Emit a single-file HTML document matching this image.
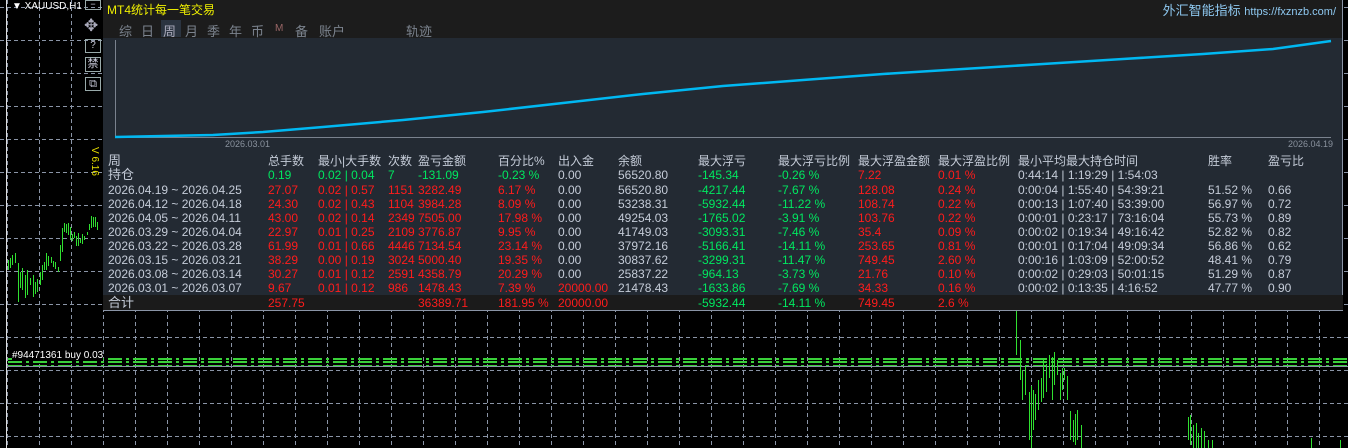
<!DOCTYPE html>
<html><head><meta charset="utf-8"><style>
*{margin:0;padding:0;box-sizing:border-box}
body{width:1348px;height:448px;background:#000;overflow:hidden;position:relative;font-family:"Liberation Sans","Noto Sans CJK SC",sans-serif}
.a{position:absolute;white-space:nowrap}
#panel{position:absolute;left:103px;top:0;width:1240px;height:311px;background:#232a33;border-right:1px solid #8a94a6;border-bottom:1px solid #8a94a6}
#hdr{position:absolute;left:0;top:0;width:100%;height:38px;background:#1c1c1c}
.t{position:absolute;font-size:12px;line-height:14px;color:#c5ccd8;white-space:nowrap}
.r{color:#ff1c1c}.g{color:#00e860}
.tab{position:absolute;top:21px;font-size:13px;color:#7b838e}
</style></head><body>
<svg class="a" style="left:0;top:0" width="1348" height="448">
<g stroke="#8a94a6" stroke-width="1" stroke-dasharray="4,3">
<line x1="0" y1="7.5" x2="1348" y2="7.5"/><line x1="0" y1="40.5" x2="1348" y2="40.5"/><line x1="0" y1="73.5" x2="1348" y2="73.5"/><line x1="0" y1="106.5" x2="1348" y2="106.5"/><line x1="0" y1="139.5" x2="1348" y2="139.5"/><line x1="0" y1="172.5" x2="1348" y2="172.5"/><line x1="0" y1="205.5" x2="1348" y2="205.5"/><line x1="0" y1="238.5" x2="1348" y2="238.5"/><line x1="0" y1="271.5" x2="1348" y2="271.5"/><line x1="0" y1="304.5" x2="1348" y2="304.5"/><line x1="0" y1="337.5" x2="1348" y2="337.5"/><line x1="0" y1="370.5" x2="1348" y2="370.5"/><line x1="0" y1="403.5" x2="1348" y2="403.5"/><line x1="0" y1="436.5" x2="1348" y2="436.5"/>
</g>
<g stroke="#8a94a6" stroke-width="1" stroke-dasharray="4,3" id="vg"></g>
<line x1="6.5" y1="0" x2="6.5" y2="448" stroke="#ddd"/>
<g stroke="#3ad13a" stroke-width="2" stroke-dasharray="14,4,3,4">
<line x1="8" y1="359" x2="1348" y2="359"/><line x1="8" y1="362" x2="1348" y2="362"/><line x1="8" y1="366" x2="1348" y2="366"/>
</g>
<line x1="8" y1="366.5" x2="1348" y2="366.5" stroke="#8a94a6"/>
<g stroke="#30e030" stroke-width="1" id="cd"></g>
</svg>
<div class="a" style="left:12px;top:1px;font-size:10px;color:#fff">▼ XAUUSD,H1</div>
<div class="a" style="left:85px;top:0;width:16px;height:10px;border:1px solid #9aa;color:#ccd;font-size:9px;line-height:7px;text-align:center">−</div>
<div class="a" style="left:84px;top:17px;font-size:17px;color:#aab;line-height:17px">✥</div>
<div class="a" style="left:85px;top:39px;width:16px;height:14px;border:1px solid #9aa;color:#ccd;font-size:10px;line-height:12px;text-align:center">?</div>
<div class="a" style="left:85px;top:57px;width:16px;height:15px;border:1px solid #9aa;color:#ccd;font-size:11px;line-height:13px;text-align:center">禁</div>
<div class="a" style="left:85px;top:77px;width:16px;height:14px;border:1px solid #9aa;color:#ccd;font-size:11px;line-height:12px;text-align:center">⧉</div>
<div class="a" style="top:147px;font-size:10px;color:#e8e000;transform:rotate(90deg);transform-origin:0 0;left:100px">V 6.16</div>
<div class="a" style="left:12px;top:350px;font-size:10px;color:#fff;background:#000">#94471361 buy 0.03</div>
<div id="panel">
<div id="hdr"></div>
<div class="a" style="left:4px;top:1px;font-size:12px;color:#f0f000">MT4统计每一笔交易</div>
<div class="a" style="right:6px;top:0;font-size:13px;color:#8ec8f0">外汇智能指标 <span style="font-size:11px">https://fxznzb.com/</span></div>
<div class="a" style="left:58px;top:20px;width:20px;height:17px;background:#2b3440"></div>
<div class="tab" style="left:16px">综</div><div class="tab" style="left:38px">日</div><div class="tab" style="left:60px;color:#aab">周</div><div class="tab" style="left:82px">月</div><div class="tab" style="left:104px">季</div><div class="tab" style="left:126px">年</div><div class="tab" style="left:148px">币</div><div class="tab" style="left:172px;font-size:10px;top:23px;color:#966">M</div><div class="tab" style="left:192px">备</div><div class="tab" style="left:216px">账户</div><div class="tab" style="left:303px">轨迹</div>
<svg class="a" style="left:0;top:38px" width="1240" height="110">
<line x1="12.5" y1="2" x2="12.5" y2="100" stroke="#7a828e"/>
<line x1="12" y1="99.5" x2="1228" y2="99.5" stroke="#7a828e"/>
<polyline fill="none" stroke="#00b8f2" stroke-width="2.5" points="12,99 60,98 110,97 160,94 220,89 300,82 380,74 460,65 540,56 620,48 700,42 780,36 860,31 940,26 1020,21 1100,16 1170,11 1228,3"/>
</svg>
<div class="a" style="left:122px;top:139px;font-size:9px;color:#8a929e">2026.03.01</div>
<div class="a" style="left:1185px;top:139px;font-size:9px;color:#8a929e">2026.04.19</div>
<div class="a" style="left:0;top:295px;width:1240px;height:15px;background:#1b1b1b"></div>
<div id="tb"></div>
</div>
<script>
var vg=document.getElementById('vg'),s='';
for(var x=7;x<1348;x+=32)s+='<line x1="'+(x+.5)+'" y1="0" x2="'+(x+.5)+'" y2="448"/>';
vg.innerHTML=s;
var cd=document.getElementById('cd');s='';
var L=[[8,120,130],[10,118,128],[12,115,125],[15,113,123],[18,123,162],[20,132,148],[22,128,150],[25,135,158],[27,130,155],[30,138,145],[33,135,157],[35,142,154],[37,139,152],[40,132,145],[42,125,140],[44,122,130],[46,113,130],[48,116,126],[51,117,123],[53,121,127],[55,122,129],[58,127,132],[60,105,121],[62,88,112],[64,83,92],[66,84,93],[68,83,95],[70,87,100],[72,94,101],[74,92,98],[76,96,106],[78,93,106],[80,99,103],[82,94,104],[84,96,100],[87,92,95],[89,84,90],[91,76,88],[93,77,87],[95,77,87],[97,82,90]];
var c=[[1003,300,310],[1016,310,355],[1020,340,380],[1022,370,400],[1025,365,395],[1029,392,440],[1031,386,448],[1033,390,430],[1035,394,420],[1038,380,410],[1041,378,402],[1043,360,398],[1046,364,392],[1049,355,378],[1052,357,400],[1054,352,385],[1057,360,375],[1060,373,400],[1062,368,390],[1064,368,380],[1067,376,400],[1070,411,440],[1073,420,442],[1075,414,445],[1077,410,440],[1081,425,448],[1188,417,440],[1190,415,445],[1193,425,448],[1196,423,448],[1198,433,448],[1201,428,448],[1204,431,448],[1208,440,448],[1212,440,448],[1311,438,448],[1340,440,448]];
for(var i=0;i<L.length;i++)c.push([L[i][0],L[i][1]+140,L[i][2]+140]);
for(var i=0;i<c.length;i++)s+='<line x1="'+(c[i][0]+.5)+'" y1="'+c[i][1]+'" x2="'+(c[i][0]+.5)+'" y2="'+c[i][2]+'"/>';
cd.innerHTML=s;
var cols=[5,165,215,285,315,395,455,515,595,675,755,835,915,1105,1165];
var R='r',G='g',W='';
var rows=[
[['周',W],['总手数',W],['最小|大手数',W],['次数',W],['盈亏金额',W],['百分比%',W],['出入金',W],['余额',W],['最大浮亏',W],['最大浮亏比例',W],['最大浮盈金额',W],['最大浮盈比例',W],['最小平均最大持仓时间',W],['胜率',W],['盈亏比',W]],
[['持仓',W],['0.19',G],['0.02 | 0.04',G],['7',G],['-131.09',G],['-0.23 %',G],['0.00',W],['56520.80',W],['-145.34',G],['-0.26 %',G],['7.22',R],['0.01 %',R],['0:44:14 | 1:19:29 | 1:54:03',W],['',W],['',W]],
[['2026.04.19 ~ 2026.04.25',W],['27.07',R],['0.02 | 0.57',R],['1151',R],['3282.49',R],['6.17 %',R],['0.00',W],['56520.80',W],['-4217.44',G],['-7.67 %',G],['128.08',R],['0.24 %',R],['0:00:04 | 1:55:40 | 54:39:21',W],['51.52 %',W],['0.66',W]],
[['2026.04.12 ~ 2026.04.18',W],['24.30',R],['0.02 | 0.43',R],['1104',R],['3984.28',R],['8.09 %',R],['0.00',W],['53238.31',W],['-5932.44',G],['-11.22 %',G],['108.74',R],['0.22 %',R],['0:00:13 | 1:07:40 | 53:39:00',W],['56.97 %',W],['0.72',W]],
[['2026.04.05 ~ 2026.04.11',W],['43.00',R],['0.02 | 0.14',R],['2349',R],['7505.00',R],['17.98 %',R],['0.00',W],['49254.03',W],['-1765.02',G],['-3.91 %',G],['103.76',R],['0.22 %',R],['0:00:01 | 0:23:17 | 73:16:04',W],['55.73 %',W],['0.89',W]],
[['2026.03.29 ~ 2026.04.04',W],['22.97',R],['0.01 | 0.25',R],['2109',R],['3776.87',R],['9.95 %',R],['0.00',W],['41749.03',W],['-3093.31',G],['-7.46 %',G],['35.4',R],['0.09 %',R],['0:00:02 | 0:19:34 | 49:16:42',W],['52.82 %',W],['0.82',W]],
[['2026.03.22 ~ 2026.03.28',W],['61.99',R],['0.01 | 0.66',R],['4446',R],['7134.54',R],['23.14 %',R],['0.00',W],['37972.16',W],['-5166.41',G],['-14.11 %',G],['253.65',R],['0.81 %',R],['0:00:01 | 0:17:04 | 49:09:34',W],['56.86 %',W],['0.62',W]],
[['2026.03.15 ~ 2026.03.21',W],['38.29',R],['0.00 | 0.19',R],['3024',R],['5000.40',R],['19.35 %',R],['0.00',W],['30837.62',W],['-3299.31',G],['-11.47 %',G],['749.45',R],['2.60 %',R],['0:00:16 | 1:03:09 | 52:00:52',W],['48.41 %',W],['0.79',W]],
[['2026.03.08 ~ 2026.03.14',W],['30.27',R],['0.01 | 0.12',R],['2591',R],['4358.79',R],['20.29 %',R],['0.00',W],['25837.22',W],['-964.13',G],['-3.73 %',G],['21.76',R],['0.10 %',R],['0:00:02 | 0:29:03 | 50:01:15',W],['51.29 %',W],['0.87',W]],
[['2026.03.01 ~ 2026.03.07',W],['9.67',R],['0.01 | 0.12',R],['986',R],['1478.43',R],['7.39 %',R],['20000.00',R],['21478.43',W],['-1633.86',G],['-7.69 %',G],['34.33',R],['0.16 %',R],['0:00:02 | 0:13:35 | 4:16:52',W],['47.77 %',W],['0.90',W]],
[['合计',W],['257.75',R],['',W],['',W],['36389.71',R],['181.95 %',R],['20000.00',R],['',W],['-5932.44',G],['-14.11 %',G],['749.45',R],['2.6 %',R],['',W],['',W],['',W]]];
var tops=[154,168,183,197,211,225,239,253,267,281,296];
var h='';
for(var r=0;r<rows.length;r++)for(var k=0;k<15;k++){var v=rows[r][k];if(!v[0])continue;
h+='<div class="t '+v[1]+'" style="left:'+cols[k]+'px;top:'+tops[r]+'px'+(r<2&&k==0||r==10&&k==0?';font-size:13px':'')+'">'+v[0]+'</div>';}
document.getElementById('tb').innerHTML=h;
</script>
</body></html>
